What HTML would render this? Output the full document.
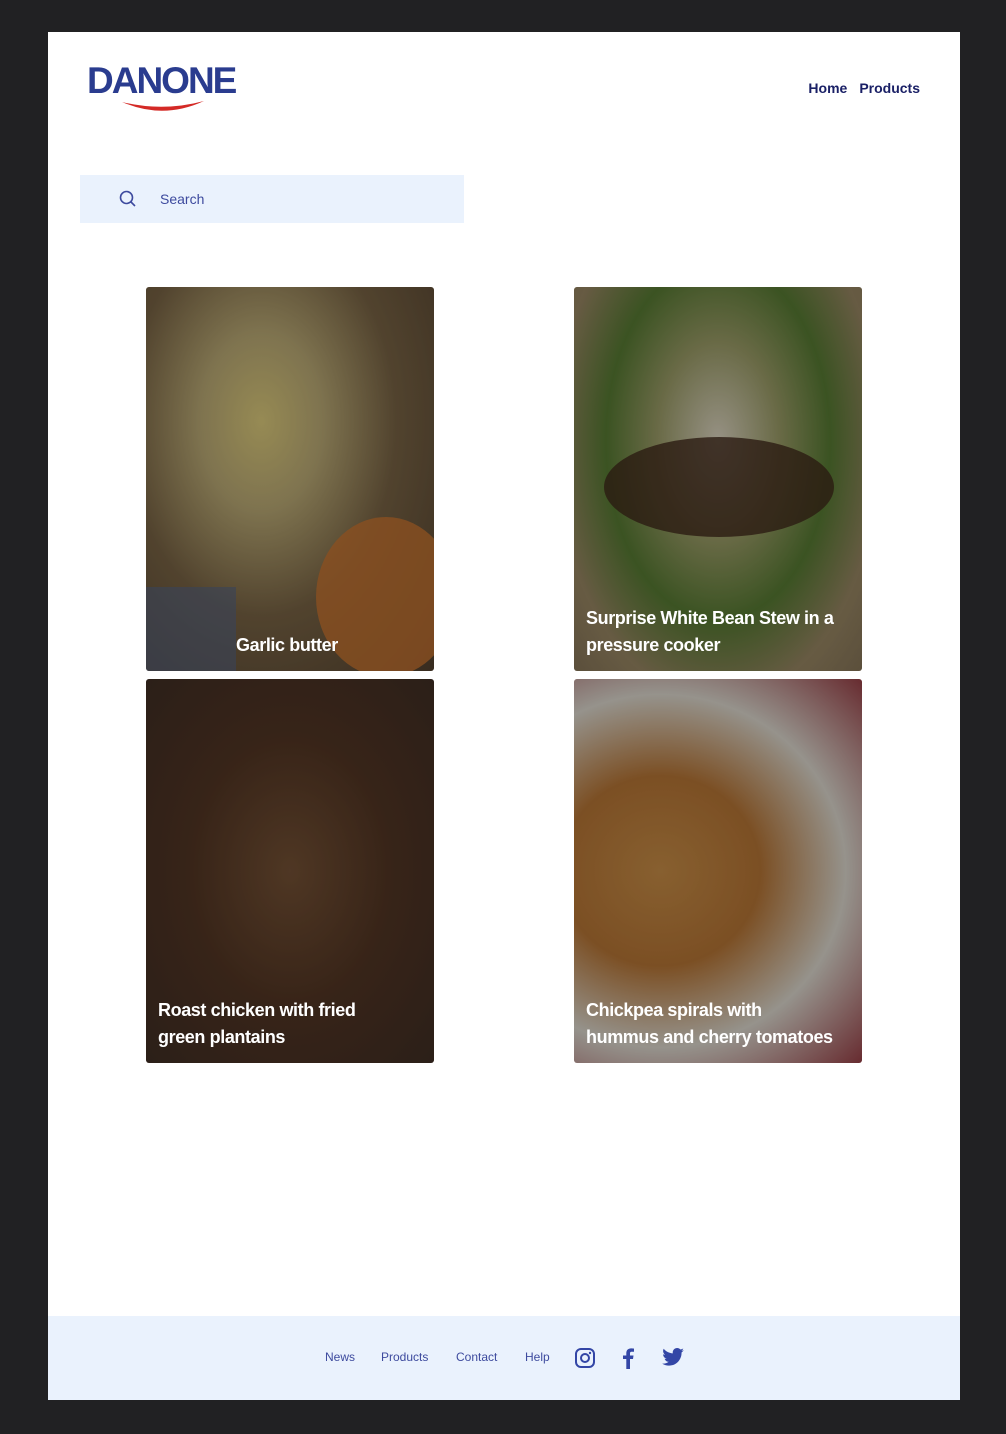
<!DOCTYPE html>
<html><head><meta charset="utf-8"><style>
*{margin:0;padding:0;box-sizing:border-box}
body{width:1006px;height:1434px;background:#212123;font-family:"Liberation Sans",sans-serif;position:relative;overflow:hidden}
.page{position:absolute;left:48px;top:32px;width:912px;height:1368px;background:#fff}
.logo{position:absolute;left:39px;top:28px;font-size:37px;font-weight:bold;color:#2a3c8f;letter-spacing:-2px;}
.nav{position:absolute;right:40px;top:48px;font-size:14px;font-weight:bold;color:#1a2066}
.nav span{margin-left:12px}
.search{position:absolute;left:32px;top:143px;width:384px;height:48px;background:#eaf2fd;}
.search .t{position:absolute;left:80px;top:16px;font-size:14px;color:#3d4a9e}
.card{position:absolute;width:288px;height:384px;border-radius:3px;overflow:hidden}
.card .o{position:absolute;inset:0;background:rgba(0,0,0,.25)}
.card .c{position:absolute;left:12px;bottom:12px;right:4px;color:#fff;font-weight:bold;font-size:18px;line-height:27px;letter-spacing:-.4px;white-space:nowrap}
.foot{position:absolute;left:0;top:1284px;width:912px;height:84px;background:#eaf2fd}
.fl{position:absolute;top:34px;font-size:12px;color:#3d4a9e}
</style></head><body>
<div class="page">
<div class="logo">DANONE<svg style="position:absolute;left:33px;top:40px" width="86" height="14" viewBox="0 0 86 14"><path d="M2 2 Q43 20 84 1 Q43 12 2 2Z" fill="#d42a26"/></svg></div>
<div class="nav"><span>Home</span><span>Products</span></div>
<div class="search"><svg style="position:absolute;left:39px;top:15px" width="18" height="18" viewBox="0 0 18 18"><circle cx="7.5" cy="7.5" r="6" fill="none" stroke="#3d4a9e" stroke-width="1.6"/><path d="M12 12 L16 16" stroke="#3d4a9e" stroke-width="1.6"/></svg><span class="t">Search</span></div>

<div class="card" style="left:98px;top:255px;background:radial-gradient(ellipse at 40% 35%,#c9b970 0%,#a99a6a 25%,#6d5a3e 55%,#4a3a2a 100%)"><div style="position:absolute;left:170px;top:230px;width:140px;height:160px;border-radius:50%;background:#b86a2c;opacity:.8"></div><div style="position:absolute;left:0;top:300px;width:90px;height:90px;background:#4b5a78;opacity:.6"></div><div class="o"></div><div class="c" style="left:90px">Garlic butter</div></div>

<div class="card" style="left:526px;top:255px;background:radial-gradient(ellipse at 50% 40%,#c9c2b0 0%,#8d8e5e 30%,#4f6f2e 55%,#8a7a5a 80%,#7a6a50 100%)"><div style="position:absolute;left:30px;top:150px;width:230px;height:100px;border-radius:50%;background:#3a2418;opacity:.8"></div><div class="o"></div><div class="c">Surprise White Bean Stew in a<br>pressure cooker</div></div>

<div class="card" style="left:98px;top:647px;background:radial-gradient(ellipse at 50% 50%,#6a4a30 0%,#4a3020 50%,#3a2a20 100%)"><div class="o"></div><div class="c">Roast chicken with fried<br>green plantains</div></div>

<div class="card" style="left:526px;top:647px;background:radial-gradient(ellipse at 30% 50%,#b58040 0%,#a56a30 35%,#c8c4bb 65%,#8a3a40 100%)"><div class="o"></div><div class="c">Chickpea spirals with<br>hummus and cherry tomatoes</div></div>

<div class="foot">
<span class="fl" style="left:277px">News</span>
<span class="fl" style="left:333px">Products</span>
<span class="fl" style="left:408px">Contact</span>
<span class="fl" style="left:477px">Help</span>
<svg style="position:absolute;left:527px;top:32px" width="20" height="20" viewBox="0 0 20 20"><rect x="1" y="1" width="18" height="18" rx="5" fill="none" stroke="#3346a6" stroke-width="2"/><circle cx="10" cy="10" r="4" fill="none" stroke="#3346a6" stroke-width="2"/><circle cx="15" cy="5" r="1.2" fill="#3346a6"/></svg>
<svg style="position:absolute;left:574px;top:31px" width="12" height="22" viewBox="0 0 12 22"><path d="M8 22V12h3l.5-3.5H8V6.5c0-1 .3-1.7 1.8-1.7H12V1.6C11.6 1.5 10.4 1.4 9 1.4 6.2 1.4 4.3 3.1 4.3 6.2v2.3H1V12h3.3v10z" fill="#3346a6"/></svg>
<svg style="position:absolute;left:614px;top:32px" width="22" height="18" viewBox="0 0 24 20"><path d="M24 2.4c-.9.4-1.8.7-2.8.8 1-.6 1.8-1.6 2.2-2.7-1 .6-2 1-3.1 1.2C19.3.7 18 0 16.6 0c-2.7 0-4.900 2.2-4.9 4.9 0 .4 0 .8.1 1.1C7.7 5.8 4.1 3.9 1.7.9c-.4.7-.7 1.6-.7 2.5 0 1.7.9 3.2 2.2 4.100-.8 0-1.600-.2-2.200-.6v.1c0 2.4 1.700 4.400 3.900 4.800-.4.1-.8.2-1.300.2-.3 0-.6 0-.9-.1.6 2 2.400 3.400 4.600 3.400-1.700 1.300-3.800 2.100-6.100 2.100-.4 0-.8 0-1.200-.1C2.2 18.8 4.8 19.6 7.5 19.6c9.1 0 14-7.5 14-14v-.6c1-.7 1.8-1.6 2.5-2.6z" fill="#3346a6"/></svg>
</div>
</div>
</body></html>
